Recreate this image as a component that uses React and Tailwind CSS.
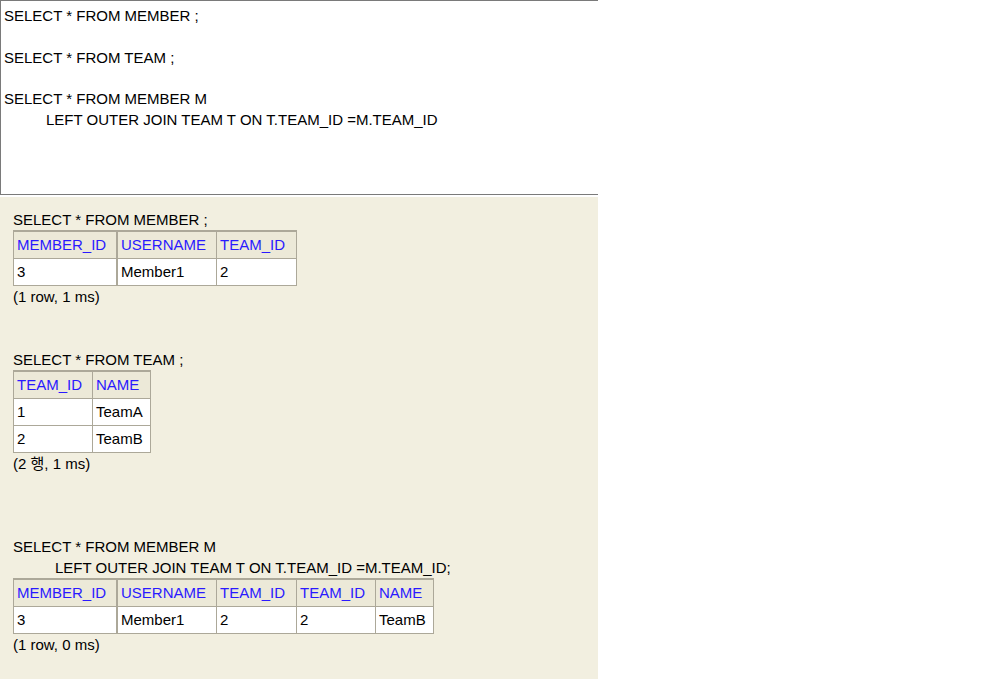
import React from 'react';

const font = "font-['Liberation_Sans','Noto_Sans_CJK_KR',Arial,sans-serif]";

// widths are full class strings so tailwind picks them up
const ResultTable = ({ columns, widths, rows }) => (
  <table className="border-separate border-spacing-0 border-l border-t-2 border-[#aca899]">
    <thead>
      <tr>
        {columns.map((c, i) => (
          <th
            key={i}
            className={`${widths[i]} border-b border-[#aca899] bg-[#ece9d8] pl-[3px] pr-0 py-[4px] text-left font-normal text-[#2a1aff] leading-[18px] whitespace-nowrap`}
          >
            {c}
          </th>
        ))}
      </tr>
    </thead>
    <tbody>
      {rows.map((r, ri) => (
        <tr key={ri}>
          {r.map((v, ci) => (
            <td
              key={ci}
              className={`${widths[ci]} border-b border-[#aca899] bg-white pl-[3px] pr-0 py-[4px] leading-[18px] whitespace-nowrap`}
            >
              {v}
            </td>
          ))}
        </tr>
      ))}
    </tbody>
  </table>
);

const memberCols = [
  'w-[104px] min-w-[104px] border-r-2',
  'w-[99px] min-w-[99px] border-r',
  'w-[80px] min-w-[80px] border-r',
];

const teamCols = [
  'w-[79px] min-w-[79px] border-r',
  'w-[58px] min-w-[58px] border-r',
];

const App = () => {
  return (
    <div className={`w-[1002px] h-[679px] bg-white text-[15px] text-black ${font}`}>
      <div className="w-[598px]">
        {/* editor */}
        <div className="h-[195px] border-l border-t border-b border-[#7a7a7a] pl-[3px] pt-[5px] leading-[20.75px]">
          <div>SELECT * FROM MEMBER ;</div>
          <div className="h-[20.75px]"></div>
          <div>SELECT * FROM TEAM ;</div>
          <div className="h-[20.75px]"></div>
          <div>SELECT * FROM MEMBER M</div>
          <div className="pl-[42px]">LEFT OUTER JOIN TEAM T ON T.TEAM_ID =M.TEAM_ID</div>
        </div>

        {/* results */}
        <div className="mt-[2px] h-[482px] bg-[#f2efe0] pl-[13px] pt-[12px] leading-[21px]">
          <div>
            <div>SELECT * FROM MEMBER ;</div>
            <ResultTable
              columns={['MEMBER_ID', 'USERNAME', 'TEAM_ID']}
              widths={memberCols}
              rows={[['3', 'Member1', '2']]}
            />
            <div>(1 row, 1 ms)</div>
          </div>

          <div className="mt-[42px]">
            <div>SELECT * FROM TEAM ;</div>
            <ResultTable
              columns={['TEAM_ID', 'NAME']}
              widths={teamCols}
              rows={[['1', 'TeamA'], ['2', 'TeamB']]}
            />
            <div>(2 행, 1 ms)</div>
          </div>

          <div className="mt-[62px]">
            <div>SELECT * FROM MEMBER M</div>
            <div className="pl-[42px]">LEFT OUTER JOIN TEAM T ON T.TEAM_ID =M.TEAM_ID;</div>
            <ResultTable
              columns={['MEMBER_ID', 'USERNAME', 'TEAM_ID', 'TEAM_ID', 'NAME']}
              widths={[...memberCols, ...teamCols]}
              rows={[['3', 'Member1', '2', '2', 'TeamB']]}
            />
            <div>(1 row, 0 ms)</div>
          </div>
        </div>
      </div>
    </div>
  );
};

export default App;
